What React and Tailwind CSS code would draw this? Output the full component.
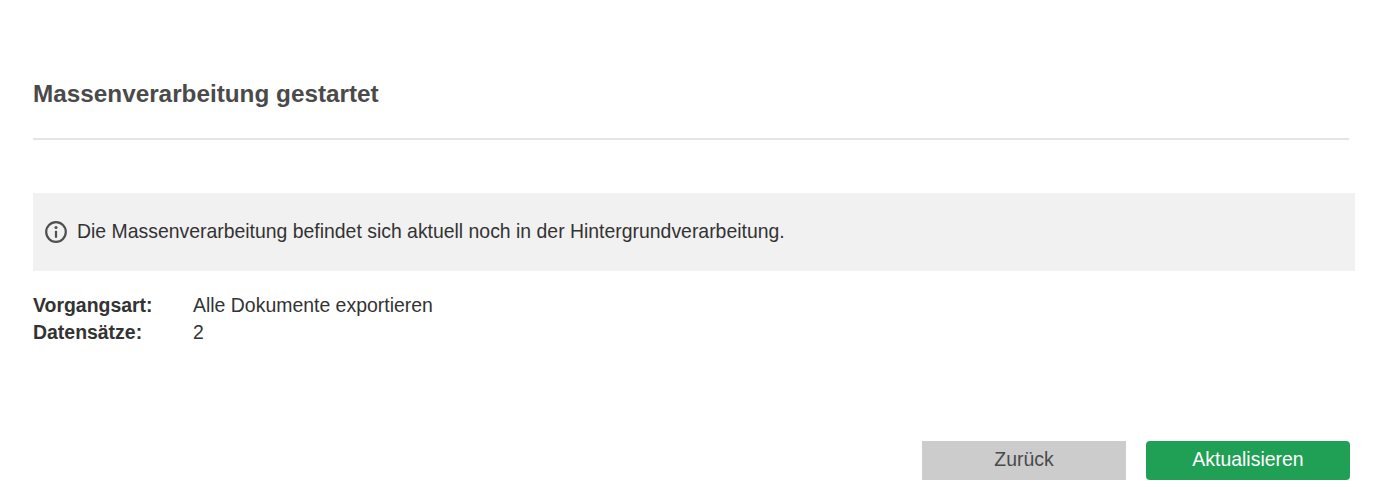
export default function App() {
  return (
    <div className="h-[487px] w-[1384px] overflow-hidden bg-white font-['Liberation_Sans',Arial,sans-serif] text-[#333]">
      <div className="pl-[33px] pr-[29px] pt-[79px]">
        <h1 className="mr-[6px] border-b-2 border-[#e4e4e4] pb-[29px] text-[24.3px] font-bold leading-[30px] text-[#4a4a4a]">
          Massenverarbeitung gestartet
        </h1>
        <div className="mt-[53px] flex h-[78px] items-center bg-[#f1f1f1] pl-[12px] text-[19.42px]">
          <svg className="mr-[10px] shrink-0" width="22" height="22" viewBox="0 0 22 22" fill="none" stroke="#4f4f4f" strokeWidth="2.2">
            <circle cx="11" cy="11" r="9.8" />
            <path d="M11 9.8v7" />
            <circle cx="11" cy="6.4" r="1.5" fill="#4f4f4f" stroke="none" />
          </svg>
          <span>Die Massenverarbeitung befindet sich aktuell noch in der Hintergrundverarbeitung.</span>
        </div>
        <div className="mt-[21px] grid grid-cols-[160px_1fr] text-[19.45px] leading-[27px]">
          <span className="font-bold">Vorgangsart:</span>
          <span>Alle Dokumente exportieren</span>
          <span className="font-bold">Datensätze:</span>
          <span>2</span>
        </div>
        <div className="mr-[5px] mt-[95px] flex justify-end gap-[20px]">
          <button className="h-[39px] w-[204px] bg-[#cccccc] pb-[2px] text-[19.45px] text-[#4a4a4a]">Zurück</button>
          <button className="h-[39px] w-[204px] rounded-[4px] bg-[#1fa055] pb-[2px] text-[19.45px] text-white">Aktualisieren</button>
        </div>
      </div>
    </div>
  )
}
